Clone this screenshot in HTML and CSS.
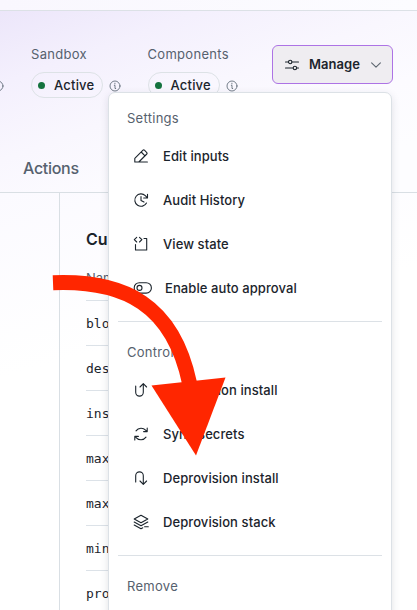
FILE: index.html
```html
<!DOCTYPE html>
<html lang="en">
<head>
<meta charset="utf-8">
<title>Install</title>
<link rel="stylesheet" href="styles.css">
</head>
<body>
<svg width="0" height="0" class="defs">
  <symbol id="info" viewBox="0 0 12 12"><circle cx="6" cy="6" r="5"/><path d="M5.3 5.3H6V8.5H6.7"/><path d="M5.9 3.2V3.9"/></symbol>
</svg>
<div class="page">
  <div class="topbar"></div>
  <header class="header">
    <div class="statuses">
      <svg class="info first"><use href="#info"/></svg>
      <div class="status"><span class="label">Sandbox</span><div class="line"><span class="badge"><i class="dot"></i>Active</span><svg class="info"><use href="#info"/></svg></div></div>
      <div class="status"><span class="label">Components</span><div class="line"><span class="badge"><i class="dot"></i>Active</span><svg class="info"><use href="#info"/></svg></div></div>
      <button class="manage">
        <svg class="sliders" viewBox="0 0 16 16"><path d="M1.5 5H4.5M8 5H14.5M1.5 11H9M12.8 11H14.5"/><circle cx="6.2" cy="5" r="1.7"/><circle cx="10.9" cy="11" r="1.7"/></svg>
        <span>Manage</span>
        <svg class="caret" viewBox="0 0 12 12"><path d="M1.6 3.8L6 8.2L10.4 3.8"/></svg>
      </button>
    </div>
    <nav class="tabs"><span>Actions</span></nav>
  </header>
  <main class="main">
    <aside class="side"></aside>
    <section class="content">
      <h2>Current inputs</h2>
      <div class="th">Name</div>
      <div class="row">block_size</div>
      <div class="row">desired</div>
      <div class="row">instance</div>
      <div class="row">max_size</div>
      <div class="row">max_count</div>
      <div class="row">min_size</div>
      <div class="row">provider</div>
    </section>
  </main>
</div>
<div class="menu">
  <div class="group">Settings</div>
  <div class="item"><svg viewBox="0 0 16 16"><path d="M5.5 14H1.8V10.4L10 2.2Q10.7 1.5 11.4 2.2L13.8 4.6Q14.5 5.3 13.8 6L5.8 14H14.4M8.2 4L12 7.8"/></svg>Edit inputs</div>
  <div class="item"><svg viewBox="0 0 16 16"><path d="M13.5 11A6.2 6.2 0 1 1 12.3 3.6L14.2 5.7M14.5 2.2V6H10.7M8 4.6V8.4L11 10.1"/></svg>Audit History</div>
  <div class="item"><svg viewBox="0 0 16 16"><path d="M3.7 1.4L1.3 3.7L3.7 6M6.5 1.4L8.9 3.7L6.5 6M2.5 8.5V14H13.7V2.5H11"/></svg>View state</div>
  <div class="item toggle"><svg viewBox="0 0 20 16"><rect x="1.2" y="2.7" width="17.2" height="10.4" rx="5.2"/><circle cx="6.5" cy="7.9" r="2.5"/></svg>Enable auto approval</div>
  <div class="divider"></div>
  <div class="group">Controls</div>
  <div class="item"><svg viewBox="0 0 16 16"><path d="M2.7 4V10.3A3.8 3.8 0 0 0 10.3 10.3V1.8M7 5L10.3 1.7L13.6 5"/></svg>Reprovision install</div>
  <div class="item"><svg viewBox="0 0 16 16"><path d="M3 4.8C5.5 1.4 10.2 1.5 12.6 4.2L13.8 5.5M14.2 2V5.6H10.6M13 11.2C10.5 14.6 5.8 14.5 3.4 11.8L2.2 10.5M1.8 14V10.4H5.4"/></svg>Sync secrets</div>
  <div class="item"><svg viewBox="0 0 16 16"><path d="M2.7 12V5.7A3.8 3.8 0 0 1 10.3 5.7V14.2M7 11L10.3 14.3L13.6 11"/></svg>Deprovision install</div>
  <div class="item"><svg viewBox="0 0 16 16"><path d="M1.2 5L8 1.2L14.8 5L8 8.8ZM1.2 8L8 11.8L14.8 8M1.2 11L8 14.8L9.8 13.8M11.6 12.7H15.3"/></svg>Deprovision stack</div>
  <div class="divider"></div>
  <div class="group">Remove</div>
</div>
<svg class="arrow" viewBox="0 0 417 610"><path class="shaft" d="M53 282.8C125 280 173 305 189.500 383"/><path class="head" d="M151.500 385.500L225.500 377.500L196 455.500Z"/></svg>
</body>
</html>
```
FILE: styles.css
```css
* { box-sizing: border-box; }
body {
  margin: 0;
  width: 417px;
  height: 610px;
  overflow: hidden;
  position: relative;
  font-family: Inter, sans-serif;
  color: #1b242c;
  background: #fff;
}
svg { fill: none; stroke: currentColor; stroke-width: 1.1; stroke-linecap: round; stroke-linejoin: round; flex: none; }
.defs { position: absolute; }
.page { height: 610px; overflow: hidden; }
.topbar { height: 11px; background: linear-gradient(90deg, #f9f7fe, #fcfcff); border-bottom: 1px solid #dce1e6; }
.header {
  height: 182px;
  border-bottom: 1px solid #d9dfe4;
  background: linear-gradient(160deg, #ece6fa 0%, #f4f0fd 22%, #f9f7fe 45%, #fcfbff 65%, #fdfdff 85%);
  overflow: hidden;
}
.statuses { display: flex; height: 128px; padding-top: 34px; }
.status { width: 116.500px; flex: none; }
.label { display: block; font-size: 13px; line-height: 18px; letter-spacing: 0.3px; color: #56616e; }
.line { display: flex; align-items: center; gap: 6px; margin-top: 9px; }
.badge {
  display: flex; align-items: center; gap: 9px;
  width: 72px; height: 26px; padding-left: 6px;
  border: 1px solid #dde2e6; border-radius: 13px;
  font-size: 13px; font-weight: 500; letter-spacing: 0.2px;
}
.dot { width: 7px; height: 7px; border-radius: 50%; background: #15733f; }
.info { width: 12px; height: 12px; color: #53606c; stroke-width: 0.8; margin-top: 1px; }
.info.first { margin: 35px 27.500px 0 -8.500px; }
.manage {
  display: flex; align-items: center;
  width: 121px; height: 39px; flex: none; margin-left: 8px; padding: 0 0 0 11px;
  border: 1px solid #ad73e5; border-radius: 6px; background: #efedf1;
  font: 600 13px Inter, sans-serif; letter-spacing: 0.05px; color: #1b242c;
}
.manage span { margin-top: -1px; }
.sliders { width: 16px; height: 16px; margin-right: 9px; }
.caret { width: 12px; height: 12px; margin-left: 10px; color: #5d6670; }
.tabs { padding-left: 23px; font-size: 16px; line-height: 24px; font-weight: 500; letter-spacing: -0.3px; color: #56616e; padding-top: 17px; }
.main { display: flex; height: 417px; background: linear-gradient(165deg, #fbfaff 0, #fff 35%); }
.side { width: 60px; border-right: 1px solid #d9dfe4; }
.content { flex: none; width: 110px; padding: 34px 0 0 26px; }
h2 { margin: 0; font-size: 16px; font-weight: 600; line-height: 24px; white-space: nowrap; }
.th { height: 50px; padding-top: 18px; font-size: 13px; line-height: 18px; color: #56616e; border-bottom: 1px solid #dce2e8; }
.row { height: 45px; border-bottom: 1px solid #dce2e8; font: 13px/46px "DejaVu Sans Mono", monospace; }
.menu {
  position: absolute; left: 108px; top: 92px; width: 284px; height: 530px;
  padding: 14px 9px;
  border: 1px solid #dce1e6; border-radius: 7px; background: #fff;
  box-shadow: 0 3px 8px rgba(30, 40, 60, 0.13);
}
.group { padding-left: 9px; height: 27px; font-size: 13px; line-height: 22px; letter-spacing: 0.28px; color: #56616e; }
.item { display: flex; align-items: center; height: 44px; padding-left: 15px; font-size: 13px; font-weight: 500; letter-spacing: 0.08px; }
.item svg { width: 16px; height: 16px; margin-right: 14px; }
.item.toggle svg { width: 20px; margin: 0 12px 0 -1px; }
.item.toggle { padding-left: 16px; }
.divider { height: 1px; margin: 11px 0 19px; background: #dce1e6; }
.arrow { position: absolute; left: 0; top: 0; width: 417px; height: 610px; }
.shaft { stroke: #ff2600; stroke-width: 15; stroke-linecap: butt; }
.head { fill: #ff2600; stroke: none; }
```
